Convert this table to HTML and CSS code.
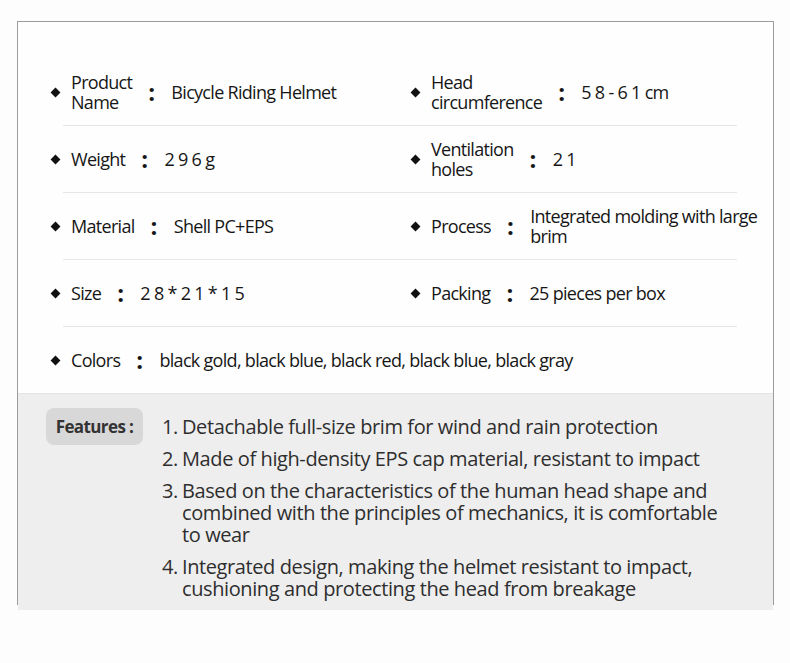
FILE: index.html
```html
<!DOCTYPE html>
<html>
<head>
<meta charset="utf-8">
<link rel="stylesheet" href="styles.css">
</head>
<body>
<div class="card">
  <div class="specs">
    <div class="row">
      <div class="cell"><span class="dot"></span><span class="label stack">Product Name</span><span class="colon">:</span><span class="value">Bicycle Riding Helmet</span></div>
      <div class="cell"><span class="dot"></span><span class="label stack">Head circumference</span><span class="colon">:</span><span class="value">5 8 - 6 1 cm</span></div>
    </div>
    <div class="sep"></div>
    <div class="row">
      <div class="cell"><span class="dot"></span><span class="label">Weight</span><span class="colon">:</span><span class="value">2 9 6 g</span></div>
      <div class="cell"><span class="dot"></span><span class="label stack">Ventilation holes</span><span class="colon">:</span><span class="value">2 1</span></div>
    </div>
    <div class="sep"></div>
    <div class="row">
      <div class="cell"><span class="dot"></span><span class="label">Material</span><span class="colon">:</span><span class="value">Shell PC+EPS</span></div>
      <div class="cell"><span class="dot"></span><span class="label">Process</span><span class="colon">:</span><span class="value wrap">Integrated molding with large brim</span></div>
    </div>
    <div class="sep"></div>
    <div class="row">
      <div class="cell"><span class="dot"></span><span class="label">Size</span><span class="colon">:</span><span class="value">2 8 * 2 1 * 1 5</span></div>
      <div class="cell"><span class="dot"></span><span class="label">Packing</span><span class="colon">:</span><span class="value">25 pieces per box</span></div>
    </div>
    <div class="sep"></div>
    <div class="row">
      <div class="cell full"><span class="dot"></span><span class="label">Colors</span><span class="colon">:</span><span class="value">black gold, black blue, black red, black blue, black gray</span></div>
    </div>
  </div>
  <div class="features">
    <div class="badge">Features :</div>
    <ol class="list">
      <li><span class="num">1.</span><span class="txt">Detachable full-size brim for wind and rain protection</span></li>
      <li><span class="num">2.</span><span class="txt">Made of high-density EPS cap material, resistant to impact</span></li>
      <li><span class="num">3.</span><span class="txt">Based on the characteristics of the human head shape and combined with the principles of mechanics, it is comfortable to wear</span></li>
      <li><span class="num">4.</span><span class="txt">Integrated design, making the helmet resistant to impact, cushioning and protecting the head from breakage</span></li>
    </ol>
  </div>
</div>
</body>
</html>
```

FILE: styles.css
```css
html, body {
  margin: 0;
  padding: 0;
  background: #fdfdfd;
}
body {
  width: 790px;
  height: 663px;
  font-family: "Open Sans", "Noto Sans", sans-serif;
  color: #161616;
}
.card {
  margin: 21px 0 0 17px;
  width: 755px;
  height: 582px;
  border: 1px solid #9c9c9c;
  background: #fefefe;
  display: flex;
  flex-direction: column;
}
.specs {
  padding-top: 37px;
}
.row {
  height: 66px;
  display: grid;
  grid-template-columns: 360px 1fr;
  align-items: center;
  padding-left: 32px;
}
.cell {
  display: flex;
  align-items: center;
  font-size: 18px;
  letter-spacing: -0.7px;
  line-height: 20px;
}
.cell.full {
  grid-column: 1 / 3;
}
.dot {
  width: 7px;
  height: 7px;
  background: #111;
  transform: rotate(45deg);
  margin: 0 12px 0 2px;
  flex: none;
}
.label {
  flex: none;
}
.label.stack {
  width: min-content;
}
.colon {
  font-size: 24px;
  font-weight: 700;
  margin: 0 17px 0 16px;
  line-height: 20px;
}
.value.wrap {
  width: 240px;
}
.sep {
  height: 1px;
  background: #e6e6e6;
  margin: 0 36px 0 45px;
}
.features {
  flex: 1;
  background: #eeeeee;
  border-top: 1px solid #e4e4e4;
  display: flex;
  align-items: flex-start;
  padding: 14px 0 0 28px;
}
.badge {
  width: 97px;
  height: 37px;
  border-radius: 8px;
  background: #d8d8d8;
  font-weight: 700;
  font-size: 17px;
  letter-spacing: -0.6px;
  color: #333;
  display: flex;
  align-items: center;
  justify-content: center;
  flex: none;
}
.list {
  list-style: none;
  margin: 8px 0 0 19px;
  padding: 0;
  width: 560px;
  font-size: 20px;
  font-weight: 500;
  letter-spacing: -0.4px;
  line-height: 22px;
  color: #2e2e2e;
}
.list li {
  display: flex;
  margin-bottom: 10px;
}
.num {
  width: 20px;
  flex: none;
}
.txt {
  width: 540px;
}
```
